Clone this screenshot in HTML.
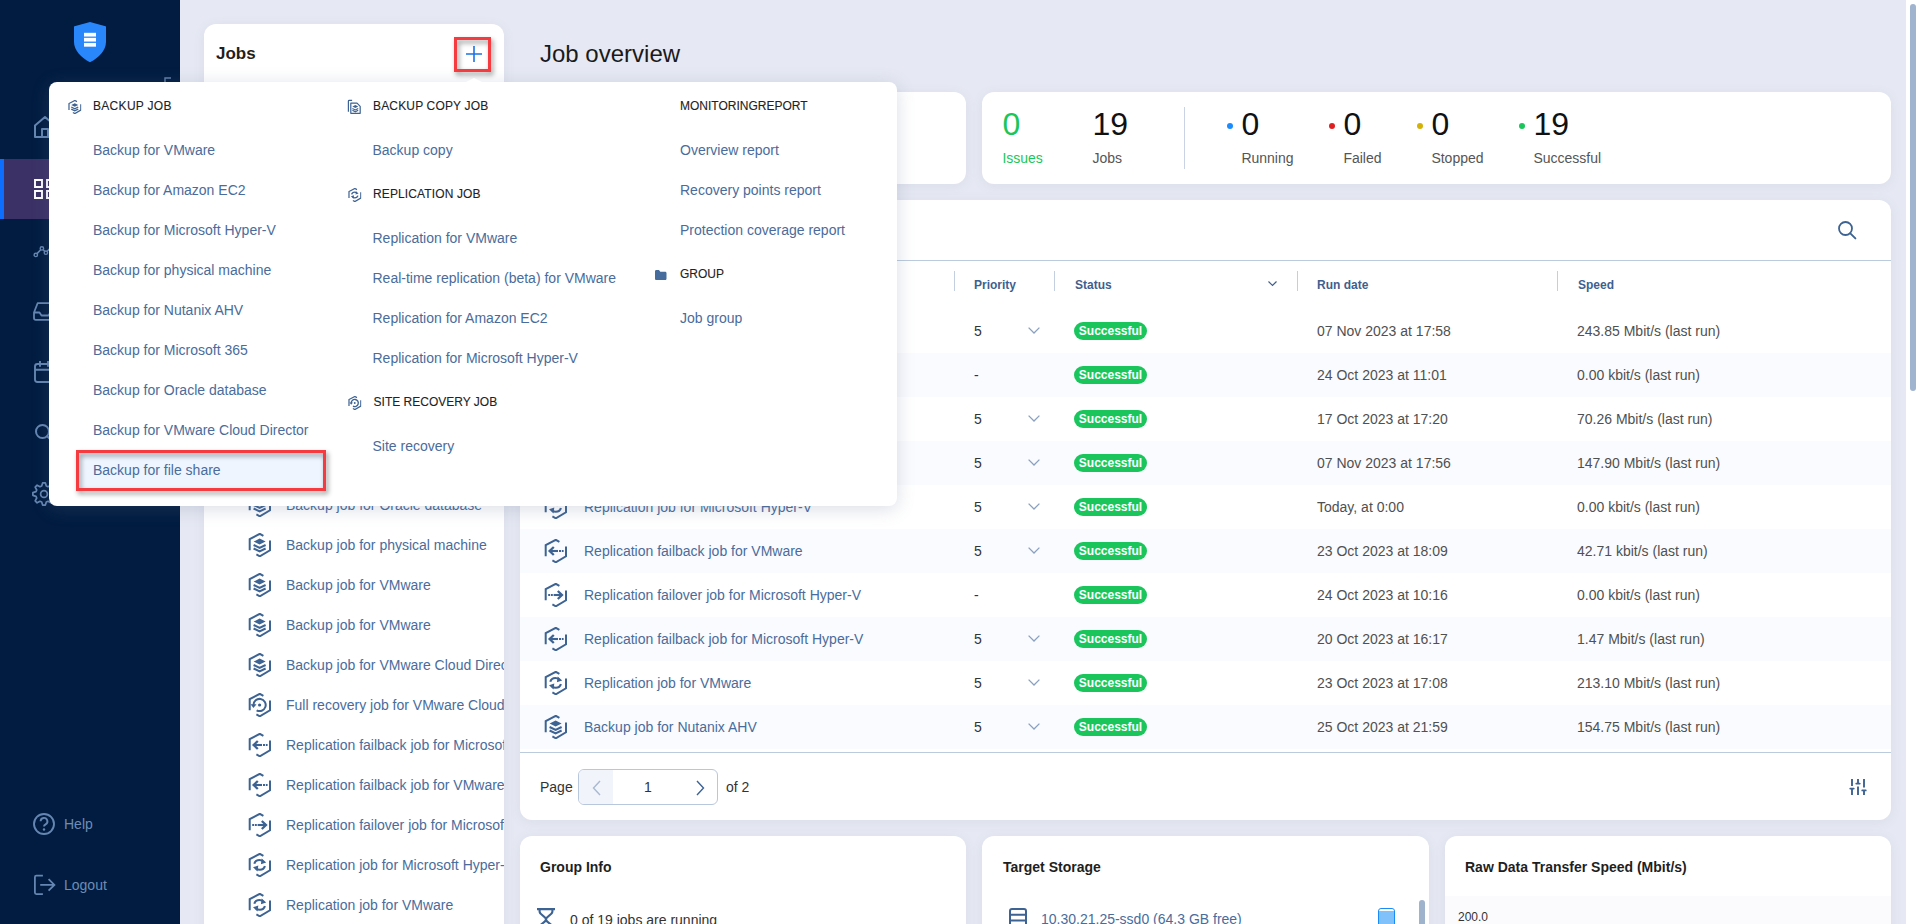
<!DOCTYPE html>
<html lang="en">
<head>
<meta charset="utf-8">
<title>Job overview</title>
<style>
*{box-sizing:border-box;margin:0;padding:0}
html,body{width:1920px;height:924px;overflow:hidden}
body{background:#e6e9f3;font-family:"Liberation Sans",sans-serif;font-size:14px;color:#333;position:relative}
.abs{position:absolute}
svg{display:block;overflow:visible}
/* sidebar */
#side{position:absolute;left:0;top:0;width:180px;height:924px;background:#011c40}
#side .act{position:absolute;left:0;top:159px;width:180px;height:60px;background:#3b3166}
#side .act:before{content:"";position:absolute;left:0;top:0;width:4px;height:60px;background:#0d6efd}
#side .ic{position:absolute;left:33px;width:24px;height:24px;color:#6586b2}
#side .lbl{position:absolute;left:64px;color:#6d8cb6;font-size:14px;line-height:16px;white-space:nowrap}
/* cards */
.card{position:absolute;background:#fff;border-radius:12px;box-shadow:0 2px 12px rgba(90,100,130,.085)}
.h3{position:absolute;font-weight:bold;font-size:14px;line-height:16px;color:#1f1f1f;white-space:nowrap}
.t{position:absolute;white-space:nowrap;line-height:16px}
/* jobs list */
#jobs{left:204px;top:24px;width:300px;height:920px;overflow:hidden;border-radius:12px 12px 0 0}
#jobs .row{position:absolute;left:0;width:340px;height:40px}
#jobs .row svg{position:absolute;left:44px;top:8px}
#jobs .row span{position:absolute;left:82px;top:12px;line-height:16px;color:#4a6c9b;white-space:nowrap}
.jic{color:#3d6393}
/* table */
#tbl{left:520px;top:200px;width:1371px;height:620px;overflow:hidden}
#tbl .hl{position:absolute;left:0;width:1371px;height:1px;background:#bccadd}
#tbl .th{position:absolute;top:78px;font-weight:bold;font-size:12px;line-height:14px;color:#3f5f8f;white-space:nowrap}
#tbl .sep{position:absolute;top:71px;width:1px;height:20px;background:#c3cfe0}
.tr{position:absolute;left:0;width:1371px;height:44px}
.tr.alt{background:#fafbfe}
.tr svg.jic{position:absolute;left:24px;top:10px}
.tr .nm{position:absolute;left:64px;top:14px;line-height:16px;color:#4a6c9b;white-space:nowrap}
.tr .pr{position:absolute;left:454px;top:14px;line-height:16px;color:#333}
.tr .cv{position:absolute;left:508px;top:18px;color:#8aa0c0}
.tr .bd{position:absolute;left:554px;top:13px;width:73px;height:18px;border-radius:9px;background:#1ac65b;color:#fff;font-weight:bold;font-size:12px;line-height:19px;text-align:center}
.tr .dt{position:absolute;left:797px;top:14px;line-height:16px;color:#505050;white-space:nowrap}
.tr .sp{position:absolute;left:1057px;top:14px;line-height:16px;color:#505050;white-space:nowrap}
/* popup */
#pop{position:absolute;left:49px;top:82px;width:848px;height:424px;background:#fff;border-radius:8px;box-shadow:0 3px 18px rgba(100,112,150,.24)}
#pop .hd{position:absolute;font-size:12px;line-height:14px;color:#222;white-space:nowrap;-webkit-text-stroke:.1px #222}
#pop .it{position:absolute;font-size:14px;line-height:16px;color:#4a6c9b;white-space:nowrap}
#pop .hi{position:absolute;color:#3d6393;--sw:2.1;--sw2:2.3}
.red{position:absolute;border:3px solid #f63b40;filter:drop-shadow(2px 3px 2.5px rgba(0,0,0,.42))}
</style>
</head>
<body>

<svg width="0" height="0" style="position:absolute">
<defs>
<symbol id="i-backup" viewBox="0 0 23 24"><path d="M1.700 17.300V6.100L11.800.800l3.600 2M22 7.400v9.900l-10.200 6-3.400-1.900" fill="none" stroke="currentColor" style="stroke-width:var(--sw,2)" stroke-linejoin="miter"/>
 <path d="M11.6 5.6l6 3-6 3-6-3z" fill="currentColor"/>
 <path d="M5.6 12l6 3 6-3M5.6 15.5l6 3 6-3" fill="none" stroke="currentColor" style="stroke-width:var(--sw2,2)"/>
</symbol>
<symbol id="i-repl" viewBox="0 0 23 24"><path d="M1.700 17.300V6.100L11.800.800l3.600 2M22 7.400v9.900l-10.200 6-3.400-1.900" fill="none" stroke="currentColor" style="stroke-width:var(--sw,2)" stroke-linejoin="miter"/>
 <path d="M6.300 10.800C7 8.200 9 7 11.400 7c1.500 0 2.700.5 3.600 1.300M16.900 13c-.7 2.600-2.700 3.800-5.100 3.800-1.500 0-2.700-.5-3.600-1.300" fill="none" stroke="currentColor" style="stroke-width:var(--sw2,2.100)"/>
 <path d="M13.700 5.400l4.500 4.100-5.300 1.700zM9.500 18.400L5 14.300l5.300-1.700z" fill="currentColor"/>
</symbol>
<symbol id="i-recov" viewBox="0 0 23 24"><path d="M1.700 17.300V6.100L11.800.800l3.600 2M22 7.400v9.900l-10.200 6-3.400-1.900" fill="none" stroke="currentColor" style="stroke-width:var(--sw,2)" stroke-linejoin="miter"/>
 <path d="M5.500 12A6.100 6.100 0 1 1 8.600 17.300" fill="none" stroke="currentColor" style="stroke-width:var(--sw2,2)"/>
 <path d="M2.500 11.200h6l-3 3.900z" fill="currentColor"/>
 <circle cx="11.600" cy="12" r="1.600" fill="currentColor"/>
</symbol>
<symbol id="i-fback" viewBox="0 0 23 24"><path d="M1.700 17.300V6.100L11.800.800l3.600 2M22 7.400v9.900l-10.200 6-3.400-1.900" fill="none" stroke="currentColor" style="stroke-width:var(--sw,2)" stroke-linejoin="miter"/>
 <path d="M6 12h8" fill="none" stroke="currentColor" style="stroke-width:var(--sw2,2.100)"/>
 <path d="M9.800 8L5.600 12l4.200 4" fill="none" stroke="currentColor" style="stroke-width:var(--sw3,2.300)"/>
 <rect x="15" y="11" width="2" height="2" fill="currentColor"/><rect x="17.800" y="11" width="1.800" height="2" fill="currentColor"/>
</symbol>
<symbol id="i-fover" viewBox="0 0 23 24"><path d="M1.700 17.300V6.100L11.800.800l3.600 2M22 7.400v9.900l-10.200 6-3.400-1.900" fill="none" stroke="currentColor" style="stroke-width:var(--sw,2)" stroke-linejoin="miter"/>
 <path d="M9.600 12h8" fill="none" stroke="currentColor" style="stroke-width:var(--sw2,2.100)"/>
 <path d="M13.800 8l4.200 4-4.200 4" fill="none" stroke="currentColor" style="stroke-width:var(--sw3,2.300)"/>
 <rect x="4.200" y="11" width="1.800" height="2" fill="currentColor"/><rect x="6.800" y="11" width="2" height="2" fill="currentColor"/>
</symbol>
<symbol id="i-chev" viewBox="0 0 12 7"><path d="M.6.6L6 6 11.4.6" fill="none" stroke="currentColor" stroke-width="1.3"/></symbol>
</defs></svg>


<div id="side">
  <svg class="abs" style="left:74px;top:22px" width="32" height="40.300" viewBox="0 0 32 41" preserveAspectRatio="none"><path d="M16 0 L31.5 4.2 C32 4.4 32 4.6 32 5 V20 C32 29 25 36 16 41 C7 36 0 29 0 20 V5 C0 4.6 0 4.4 .5 4.2 Z" fill="#2a87fb"/><rect x="10" y="11" width="12" height="3.8" fill="#fff"/><rect x="10" y="16.1" width="12" height="3.8" fill="#fff"/><rect x="10" y="21.3" width="12" height="3.8" fill="#fff"/></svg>
  <svg class="abs" style="left:164px;top:77px;color:#5f7ea8" width="8" height="10" viewBox="0 0 8 10"><path d="M7 1H1v9" fill="none" stroke="currentColor" stroke-width="1.4"/></svg>
  <div class="act"></div>
  <!-- home -->
  <svg class="ic" style="top:115px" viewBox="0 0 24 24"><path d="M2 10.5L12 2l10 8.500V22H2z M9 22v-8h6v8" fill="none" stroke="currentColor" stroke-width="2" stroke-linejoin="round"/></svg>
  <!-- grid -->
  <svg class="ic" style="top:177px;color:#fff" viewBox="0 0 24 24"><path d="M2 3h7v7H2zM14 3h7v7h-7zM2 14h7v7H2zM14 14h7v7h-7z" fill="none" stroke="currentColor" stroke-width="1.9"/></svg>
  <!-- activity -->
  <svg class="ic" style="top:238px" viewBox="0 0 24 24"><path d="M4 15.600L7.700 11.700M10.300 11.800l1.300 1.500M14.200 13.300L17.700 9.800" fill="none" stroke="currentColor" stroke-width="1.600"/><circle cx="2.800" cy="16.900" r="1.700" fill="none" stroke="currentColor" stroke-width="1.400"/><circle cx="8.900" cy="10.400" r="1.700" fill="none" stroke="currentColor" stroke-width="1.400"/><circle cx="12.900" cy="14.700" r="1.700" fill="none" stroke="currentColor" stroke-width="1.400"/><circle cx="19" cy="8.500" r="1.700" fill="none" stroke="currentColor" stroke-width="1.400"/></svg>
  <!-- inbox -->
  <svg class="ic" style="top:299px" viewBox="0 0 24 24"><path d="M1 13.500L4.600 4.200h14.800L23 13.500V19a1.800 1.800 0 0 1-1.800 1.800H2.800A1.800 1.800 0 0 1 1 19zM1 13.500h5.500l2 3h7l2-3H23" fill="none" stroke="currentColor" stroke-width="1.800" stroke-linejoin="round"/></svg>
  <!-- calendar -->
  <svg class="ic" style="top:360px" viewBox="0 0 24 24"><rect x="2" y="4" width="18" height="18" rx="2.500" fill="none" stroke="currentColor" stroke-width="1.900"/><path d="M2 9.800h18M7 1v5.700M15 1v5.700" fill="none" stroke="currentColor" stroke-width="1.900"/></svg>
  <!-- search -->
  <svg class="ic" style="top:421px" viewBox="0 0 24 24"><circle cx="9.500" cy="10.500" r="6.500" fill="none" stroke="currentColor" stroke-width="2"/><path d="M14.200 15.200l5.800 5.800" stroke="currentColor" stroke-width="2" stroke-linecap="round"/></svg>
  <!-- gear -->
  <svg class="ic" style="top:482px;left:32px" viewBox="0 0 24 24"><circle cx="12" cy="12" r="3.400" fill="none" stroke="currentColor" stroke-width="1.700"/><path d="M9.68 4.03L10.64 0.88L13.36 0.88L14.32 4.03L16.00 4.73L18.90 3.18L20.82 5.10L19.27 8.00L19.97 9.68L23.12 10.64L23.12 13.36L19.97 14.32L19.27 16.00L20.82 18.90L18.90 20.82L16.00 19.27L14.32 19.97L13.36 23.12L10.64 23.12L9.68 19.97L8.00 19.27L5.10 20.82L3.18 18.90L4.73 16.00L4.03 14.32L0.88 13.36L0.88 10.64L4.03 9.68L4.73 8.00L3.18 5.10L5.10 3.18L8.00 4.73z" fill="none" stroke="currentColor" stroke-width="1.700" stroke-linejoin="round"/></svg>
  <!-- help -->
  <svg class="ic" style="top:812px;left:32px" viewBox="0 0 24 24"><circle cx="12" cy="12" r="10" fill="none" stroke="currentColor" stroke-width="1.900"/><path d="M8.600 9.300a3.400 3.400 0 1 1 5 3c-1.100.6-1.600 1.200-1.600 2.300" fill="none" stroke="currentColor" stroke-width="1.900"/><circle cx="12" cy="17.500" r="1.200" fill="currentColor"/></svg>
  <div class="lbl" style="top:816px">Help</div>
  <!-- logout -->
  <svg class="ic" style="top:873px" viewBox="0 0 24 24"><path d="M9.900 2.700H3.400a1.500 1.500 0 0 0-1.500 1.500v15.400a1.500 1.500 0 0 0 1.500 1.500h6.500M7.200 11.900h13.800M15.600 6.100l5.800 5.800-5.800 5.800" fill="none" stroke="currentColor" stroke-width="1.800"/></svg>
  <div class="lbl" style="top:877px">Logout</div>
</div>


<div class="card" id="jobs">
  <div class="t" style="left:12px;top:20px;font-weight:bold;font-size:17px;line-height:20px;color:#1f1f1f">Jobs</div>
  <svg class="abs" style="left:262px;top:22px" width="16" height="16" viewBox="0 0 16 16"><path d="M8 0v16M0 8h16" stroke="#1a73e8" stroke-width="1.600"/></svg>
  <div class="row" style="top:141px"><svg class="jic" width="23" height="24"><use href="#i-backup"/></svg><span>Backup job for Amazon EC2</span></div><div class="row" style="top:181px"><svg class="jic" width="23" height="24"><use href="#i-backup"/></svg><span>Backup job for file share</span></div><div class="row" style="top:221px"><svg class="jic" width="23" height="24"><use href="#i-backup"/></svg><span>Backup copy job</span></div><div class="row" style="top:261px"><svg class="jic" width="23" height="24"><use href="#i-backup"/></svg><span>Backup job for Microsoft 365</span></div><div class="row" style="top:301px"><svg class="jic" width="23" height="24"><use href="#i-backup"/></svg><span>Backup job for Microsoft Hyper-V</span></div><div class="row" style="top:341px"><svg class="jic" width="23" height="24"><use href="#i-backup"/></svg><span>Backup job for Nutanix AHV</span></div><div class="row" style="top:381px"><svg class="jic" width="23" height="24"><use href="#i-backup"/></svg><span>Backup job for Nutanix AHV</span></div><div class="row" style="top:421px"><svg class="jic" width="23" height="24"><use href="#i-backup"/></svg><span>Backup job for Oracle database</span></div><div class="row" style="top:461px"><svg class="jic" width="23" height="24"><use href="#i-backup"/></svg><span>Backup job for Oracle database</span></div><div class="row" style="top:501px"><svg class="jic" width="23" height="24"><use href="#i-backup"/></svg><span>Backup job for physical machine</span></div><div class="row" style="top:541px"><svg class="jic" width="23" height="24"><use href="#i-backup"/></svg><span>Backup job for VMware</span></div><div class="row" style="top:581px"><svg class="jic" width="23" height="24"><use href="#i-backup"/></svg><span>Backup job for VMware</span></div><div class="row" style="top:621px"><svg class="jic" width="23" height="24"><use href="#i-backup"/></svg><span>Backup job for VMware Cloud Director</span></div><div class="row" style="top:661px"><svg class="jic" width="23" height="24"><use href="#i-recov"/></svg><span>Full recovery job for VMware Cloud Director</span></div><div class="row" style="top:701px"><svg class="jic" width="23" height="24"><use href="#i-fback"/></svg><span>Replication failback job for Microsoft Hyper-V</span></div><div class="row" style="top:741px"><svg class="jic" width="23" height="24"><use href="#i-fback"/></svg><span>Replication failback job for VMware</span></div><div class="row" style="top:781px"><svg class="jic" width="23" height="24"><use href="#i-fover"/></svg><span>Replication failover job for Microsoft Hyper-V</span></div><div class="row" style="top:821px"><svg class="jic" width="23" height="24"><use href="#i-repl"/></svg><span>Replication job for Microsoft Hyper-V</span></div><div class="row" style="top:861px"><svg class="jic" width="23" height="24"><use href="#i-repl"/></svg><span>Replication job for VMware</span></div>
</div>
<div class="red" style="left:454px;top:37px;width:37px;height:35px"></div>

<div class="t" style="left:540px;top:40px;font-size:24px;line-height:28px;color:#1a1a1a">Job overview</div>

<div class="card" style="left:520px;top:92px;width:446px;height:92px"></div>
<div class="card" id="stats" style="left:982px;top:92px;width:909px;height:92px">
 <div class="t" style="left:20.4px;top:14px;font-size:32px;line-height:36px;color:#1ac65b">0</div><div class="t" style="left:20.4px;top:58px;color:#1ac65b">Issues</div>
 <div class="t" style="left:110.4px;top:14px;font-size:32px;line-height:36px;color:#111">19</div><div class="t" style="left:110.4px;top:58px;color:#555">Jobs</div>
 <div class="abs" style="left:202px;top:15px;width:1px;height:62px;background:#c9d3e3"></div>
 <div class="abs" style="left:245.2px;top:31px;width:6px;height:6px;border-radius:3px;background:#1a8cff"></div><div class="t" style="left:259.4px;top:14px;font-size:32px;line-height:36px;color:#111">0</div><div class="t" style="left:259.4px;top:58px;color:#555">Running</div>
 <div class="abs" style="left:347.2px;top:31px;width:6px;height:6px;border-radius:3px;background:#e02020"></div><div class="t" style="left:361.4px;top:14px;font-size:32px;line-height:36px;color:#111">0</div><div class="t" style="left:361.4px;top:58px;color:#555">Failed</div>
 <div class="abs" style="left:435.2px;top:31px;width:6px;height:6px;border-radius:3px;background:#d4b106"></div><div class="t" style="left:449.4px;top:14px;font-size:32px;line-height:36px;color:#111">0</div><div class="t" style="left:449.4px;top:58px;color:#555">Stopped</div>
 <div class="abs" style="left:537.2px;top:31px;width:6px;height:6px;border-radius:3px;background:#1ac65b"></div><div class="t" style="left:551.4px;top:14px;font-size:32px;line-height:36px;color:#111">19</div><div class="t" style="left:551.4px;top:58px;color:#555">Successful</div>
</div>


<div class="card" id="tbl">
 <svg class="abs" style="left:1317px;top:20px;color:#3d6393" width="20" height="20" viewBox="0 0 20 20"><circle cx="8.500" cy="8.500" r="6.500" fill="none" stroke="currentColor" stroke-width="1.800"/><path d="M13.300 13.300L18.400 18.400" stroke="currentColor" stroke-width="1.900" stroke-linecap="round"/></svg>
 <div class="hl" style="top:60px"></div>
 <div class="th" style="left:64px">Job name</div>
 <div class="sep" style="left:434px"></div><div class="th" style="left:454px">Priority</div>
 <div class="sep" style="left:534px"></div><div class="th" style="left:555px">Status</div>
 <svg class="abs" style="left:748px;top:81px;color:#3f5f8f" width="9" height="5" viewBox="0 0 9 5"><path d="M.5.500l4 4 4-4" fill="none" stroke="currentColor" stroke-width="1.200"/></svg>
 <div class="sep" style="left:777px"></div><div class="th" style="left:797px">Run date</div>
 <div class="sep" style="left:1037px"></div><div class="th" style="left:1058px">Speed</div>
 <div class="tr" style="top:109px"><svg class="jic" width="23" height="24"><use href="#i-backup"/></svg><span class="nm">Backup job for VMware</span><span class="pr">5</span><svg class="cv" width="12" height="7"><use href="#i-chev"/></svg><span class="bd">Successful</span><span class="dt">07 Nov 2023 at 17:58</span><span class="sp">243.85 Mbit/s (last run)</span></div><div class="tr alt" style="top:153px"><svg class="jic" width="23" height="24"><use href="#i-fover"/></svg><span class="nm">Replication failover job for VMware</span><span class="pr">-</span><span class="bd">Successful</span><span class="dt">24 Oct 2023 at 11:01</span><span class="sp">0.00 kbit/s (last run)</span></div><div class="tr" style="top:197px"><svg class="jic" width="23" height="24"><use href="#i-backup"/></svg><span class="nm">Backup job for Microsoft Hyper-V</span><span class="pr">5</span><svg class="cv" width="12" height="7"><use href="#i-chev"/></svg><span class="bd">Successful</span><span class="dt">17 Oct 2023 at 17:20</span><span class="sp">70.26 Mbit/s (last run)</span></div><div class="tr alt" style="top:241px"><svg class="jic" width="23" height="24"><use href="#i-backup"/></svg><span class="nm">Backup job for physical machine</span><span class="pr">5</span><svg class="cv" width="12" height="7"><use href="#i-chev"/></svg><span class="bd">Successful</span><span class="dt">07 Nov 2023 at 17:56</span><span class="sp">147.90 Mbit/s (last run)</span></div><div class="tr" style="top:285px"><svg class="jic" width="23" height="24"><use href="#i-repl"/></svg><span class="nm">Replication job for Microsoft Hyper-V</span><span class="pr">5</span><svg class="cv" width="12" height="7"><use href="#i-chev"/></svg><span class="bd">Successful</span><span class="dt">Today, at 0:00</span><span class="sp">0.00 kbit/s (last run)</span></div><div class="tr alt" style="top:329px"><svg class="jic" width="23" height="24"><use href="#i-fback"/></svg><span class="nm">Replication failback job for VMware</span><span class="pr">5</span><svg class="cv" width="12" height="7"><use href="#i-chev"/></svg><span class="bd">Successful</span><span class="dt">23 Oct 2023 at 18:09</span><span class="sp">42.71 kbit/s (last run)</span></div><div class="tr" style="top:373px"><svg class="jic" width="23" height="24"><use href="#i-fover"/></svg><span class="nm">Replication failover job for Microsoft Hyper-V</span><span class="pr">-</span><span class="bd">Successful</span><span class="dt">24 Oct 2023 at 10:16</span><span class="sp">0.00 kbit/s (last run)</span></div><div class="tr alt" style="top:417px"><svg class="jic" width="23" height="24"><use href="#i-fback"/></svg><span class="nm">Replication failback job for Microsoft Hyper-V</span><span class="pr">5</span><svg class="cv" width="12" height="7"><use href="#i-chev"/></svg><span class="bd">Successful</span><span class="dt">20 Oct 2023 at 16:17</span><span class="sp">1.47 Mbit/s (last run)</span></div><div class="tr" style="top:461px"><svg class="jic" width="23" height="24"><use href="#i-repl"/></svg><span class="nm">Replication job for VMware</span><span class="pr">5</span><svg class="cv" width="12" height="7"><use href="#i-chev"/></svg><span class="bd">Successful</span><span class="dt">23 Oct 2023 at 17:08</span><span class="sp">213.10 Mbit/s (last run)</span></div><div class="tr alt" style="top:505px"><svg class="jic" width="23" height="24"><use href="#i-backup"/></svg><span class="nm">Backup job for Nutanix AHV</span><span class="pr">5</span><svg class="cv" width="12" height="7"><use href="#i-chev"/></svg><span class="bd">Successful</span><span class="dt">25 Oct 2023 at 21:59</span><span class="sp">154.75 Mbit/s (last run)</span></div>
 <div class="hl" style="top:552px"></div>
 <div class="t" style="left:20px;top:579px;color:#333">Page</div>
 <div class="abs" style="left:58px;top:569px;width:140px;height:36px;border:1px solid #b9c7dc;border-radius:6px;background:#fff;overflow:hidden">
   <div class="abs" style="left:0;top:0;width:34px;height:34px;background:#f1f4fa"></div>
   <svg class="abs" style="left:13px;top:10px;color:#a9b9d1" width="9" height="16" viewBox="0 0 9 16"><path d="M8 1L1.500 8 8 15" fill="none" stroke="currentColor" stroke-width="1.400"/></svg>
   <div class="t" style="left:34px;top:9px;width:70px;text-align:center;color:#333">1</div>
   <svg class="abs" style="left:117px;top:10px;color:#3d6393" width="9" height="16" viewBox="0 0 9 16"><path d="M1 1l6.500 7L1 15" fill="none" stroke="currentColor" stroke-width="1.400"/></svg>
 </div>
 <div class="t" style="left:206px;top:579px;color:#333">of 2</div>
 <svg class="abs" style="left:1329px;top:578px;color:#3d6393" width="18" height="18" viewBox="0 0 18 18"><path d="M3 1v7M3 10.600v6.400M9 1v4.600M9 8.500v8.500M15 1v8.500M15 12.400v4.600" stroke="currentColor" stroke-width="1.900"/><path d="M1.200 10.600h3.600M7.200 5.600h3.600M13.200 12.400h3.600" stroke="currentColor" stroke-width="1.700" stroke-linecap="round"/></svg>
</div>


<div class="card" style="left:520px;top:836px;width:446px;height:120px"><div class="h3" style="left:20px;top:23px">Group Info</div>
 <svg class="abs" style="left:17px;top:72px;color:#3d6393" width="18" height="20" viewBox="0 0 18 20"><path d="M0 1.100h18M2.600 1v2.500c0 3.500 6.400 4.500 6.400 7.800M15.400 1v2.500c0 3.500-6.400 4.500-6.400 7.800M2.600 21.600v-2.500c0-3.500 6.400-4.500 6.400-7.800M15.400 21.600v-2.500c0-3.500-6.400-4.500-6.400-7.800" fill="none" stroke="currentColor" stroke-width="2.100"/></svg>
 <div class="t" style="left:50px;top:76px;color:#333">0 of 19 jobs are running</div>
</div>
<div class="card" style="left:982px;top:836px;width:447px;height:120px;overflow:hidden"><div class="h3" style="left:21px;top:23px">Target Storage</div>
 <svg class="abs" style="left:27px;top:72px;color:#3d6393" width="18" height="20" viewBox="0 0 18 20"><rect x="1" y="1" width="16" height="17.400" rx="2" fill="none" stroke="currentColor" stroke-width="2"/><path d="M1 6.700h16M1 12.500h16" stroke="currentColor" stroke-width="2"/></svg>
 <div class="t" style="left:59px;top:75px;color:#4a6c9b">10.30.21.25-ssd0 (64.3 GB free)</div>
 <div class="abs" style="left:396px;top:72px;width:17px;height:30px;border:1px solid #1a8cf5;border-radius:3px 3px 0 0;background:linear-gradient(#fff 0,#fff 2px,#80c1fb 2px)"></div>
 <div class="abs" style="left:437px;top:64px;width:6px;height:60px;border-radius:3px;background:#9fb3cd"></div>
</div>
<div class="card" style="left:1445px;top:836px;width:446px;height:120px;overflow:hidden"><div class="h3" style="left:20px;top:23px">Raw Data Transfer Speed (Mbit/s)</div>
 <div class="abs" style="left:0;top:60px;width:447px;height:60px;background:#fbfbfe"></div>
 <div class="t" style="left:13px;top:74px;font-size:12px;line-height:14px;color:#333">200.0</div>
</div>


<div class="abs" style="left:1906px;top:0;width:14px;height:924px;background:#fff"></div>
<div class="abs" style="left:1910px;top:4px;width:6px;height:387px;border-radius:3px;background:#a0b4d0"></div>


<div id="pop">
 <div class="abs" style="left:417px;top:-4px;width:0;height:0;border-left:8px solid transparent;border-right:8px solid transparent;border-bottom:4px solid #fff"></div>
 <div class="abs" style="left:27px;top:368px;width:250px;height:41px;background:#eef5ff"></div>
 <svg class="hi" style="left:18.599999999999994px;top:18px" width="13.400" height="14"><use href="#i-backup"/></svg><svg class="hi" style="left:298.7px;top:106px" width="13.400" height="14"><use href="#i-repl"/></svg><svg class="hi" style="left:298.7px;top:314px" width="13.400" height="14"><use href="#i-recov"/></svg><svg class="hi" style="left:298px;top:17px" width="14" height="16" viewBox="0 0 14 16"><path d="M1.400 12.800V2.100a.8.800 0 0 1 .8-.8h2.900" fill="none" stroke="currentColor" stroke-width="1.200"/><path d="M3.800 4.100h6.200l3.200 3.200v7h-9.400z" fill="none" stroke="currentColor" stroke-width="1.200" stroke-linejoin="round"/><path d="M8.300 5.900l2.900 1.500-2.900 1.500-2.900-1.500z" fill="currentColor"/><path d="M5.400 9.400l2.900 1.500 2.900-1.500M5.400 11.300l2.900 1.500 2.900-1.500" fill="none" stroke="currentColor" stroke-width="1.100"/></svg><svg class="hi" style="left:606.4px;top:188px;color:#456c9c" width="11.500" height="10" viewBox="0 0 13 11" preserveAspectRatio="none"><path d="M0 1.500C0 .7.700 0 1.500 0h3l1.500 1.800h5.500c.8 0 1.500.7 1.500 1.500v6.200c0 .8-.7 1.500-1.500 1.500h-10C.700 11 0 10.300 0 9.500z" fill="currentColor"/></svg>
 <div class="hd" style="left:44px;top:17px;letter-spacing:0.3px">BACKUP JOB</div><div class="it" style="left:44px;top:60px">Backup for VMware</div><div class="it" style="left:44px;top:100px">Backup for Amazon EC2</div><div class="it" style="left:44px;top:140px">Backup for Microsoft Hyper-V</div><div class="it" style="left:44px;top:180px">Backup for physical machine</div><div class="it" style="left:44px;top:220px">Backup for Nutanix AHV</div><div class="it" style="left:44px;top:260px">Backup for Microsoft 365</div><div class="it" style="left:44px;top:300px">Backup for Oracle database</div><div class="it" style="left:44px;top:340px">Backup for VMware Cloud Director</div><div class="it" style="left:44px;top:380px">Backup for file share</div><div class="hd" style="left:324.0px;top:17px;letter-spacing:0.16px">BACKUP COPY JOB</div><div class="it" style="left:323.5px;top:60px">Backup copy</div><div class="hd" style="left:324.0px;top:105px;letter-spacing:0.12px">REPLICATION JOB</div><div class="it" style="left:323.5px;top:148px">Replication for VMware</div><div class="it" style="left:323.5px;top:188px">Real-time replication (beta) for VMware</div><div class="it" style="left:323.5px;top:228px">Replication for Amazon EC2</div><div class="it" style="left:323.5px;top:268px">Replication for Microsoft Hyper-V</div><div class="hd" style="left:324.6px;top:313px;letter-spacing:0px">SITE RECOVERY JOB</div><div class="it" style="left:323.5px;top:356px">Site recovery</div><div class="hd" style="left:631px;top:17px;letter-spacing:0px">MONITORINGREPORT</div><div class="it" style="left:631px;top:60px">Overview report</div><div class="it" style="left:631px;top:100px">Recovery points report</div><div class="it" style="left:631px;top:140px">Protection coverage report</div><div class="hd" style="left:631px;top:185px;letter-spacing:0px">GROUP</div><div class="it" style="left:631px;top:228px">Job group</div>
 <div class="red" style="left:27px;top:368px;width:250px;height:41px"></div>
</div>

</body>
</html>
